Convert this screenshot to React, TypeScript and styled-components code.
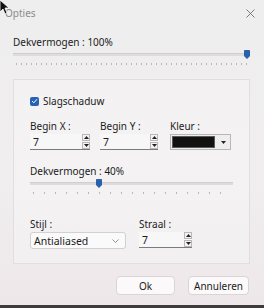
import React from "react";
import styled, { createGlobalStyle } from "styled-components";

const GlobalStyle = createGlobalStyle`
  html, body {
    margin: 0;
    padding: 0;
    background: #3f3a3c;
  }
  * {
    box-sizing: border-box;
  }
`

const Window = styled.div`
  position: relative;
  width: 264px;
  height: 305px;
  display: flex;
  flex-direction: column;
  background: linear-gradient(180deg, #efeeef 0%, #f0eeef 60%, #eee7ea 100%);
  font-family: "Noto Sans", "Open Sans", sans-serif;
  font-size: 10px;
  color: #1b1b1b;
  overflow: hidden;
`

const TitleBar = styled.div`
  height: 25px;
  display: flex;
  align-items: center;
  justify-content: space-between;
  padding: 0 9px 0 5px;
`

const Title = styled.span`
  color: #8d8b8c;
  font-size: 10px;
`

const CloseButton = styled.button`
  border: none;
  background: none;
  padding: 0;
  width: 9px;
  height: 9px;
  display: flex;
  margin-top: 2px;
`

const Cursor = styled.svg`
  position: absolute;
  left: -1px;
  top: -1px;
`

const Content = styled.div`
  display: flex;
  flex-direction: column;
  padding: 0 14px 0 13px;
`

const Label = styled.div<{ $top?: number }>`
  line-height: 12px;
  height: 12px;
  margin-top: ${p => p.$top || 0}px;
  white-space: nowrap;
`

const SliderBox = styled.div<{ $w?: number }>`
  position: relative;
  height: 17px;
  width: ${p => (p.$w ? `${p.$w}px` : "100%")};
  margin-top: 1px;
`

const Track = styled.div`
  position: absolute;
  left: 0;
  right: 0;
  top: 4px;
  height: 3px;
  background: #dedcdd;
  border-top: 1px solid #cfcdce;
`

const Ticks = styled.div<{ $step: number; $inset: number }>`
  position: absolute;
  left: ${p => p.$inset}px;
  right: ${p => p.$inset}px;
  top: 14px;
  height: 2px;
  background: repeating-linear-gradient(
    90deg,
    #b8b6b7 0px,
    #b8b6b7 1px,
    transparent 1px,
    transparent ${p => p.$step}px
  );
`

const Thumb = styled.svg`
  position: absolute;
  top: 1px;
  margin-left: -3px;
`

const GroupBox = styled.div`
  margin-top: 13px;
  width: 237px;
  border: 1px solid #e1dedf;
  background: rgba(255, 255, 255, 0.28);
  padding: 15px 16px 14px 16px;
  display: flex;
  flex-direction: column;
`

const CheckRow = styled.label`
  display: flex;
  align-items: center;
  gap: 4px;
  height: 12px;
  line-height: 12px;
`

const CheckBox = styled.span`
  width: 9px;
  height: 9px;
  border-radius: 2px;
  background: #2761b3;
  display: flex;
  align-items: center;
  justify-content: center;
`

const Row = styled.div<{ $top: number; $gap: number }>`
  display: flex;
  gap: ${p => p.$gap}px;
  margin-top: ${p => p.$top}px;
`

const Field = styled.div<{ $w: number }>`
  display: flex;
  flex-direction: column;
  gap: 2px;
  width: ${p => p.$w}px;
`

const SpinBox = styled.div`
  height: 16px;
  display: flex;
  align-items: center;
  background: #f8f7f8;
  border-bottom: 1px solid #7d7b7c;
  padding-left: 3px;
`

const SpinValue = styled.span`
  flex: 1;
  font-size: 10.5px;
`

const SpinButtons = styled.div`
  display: flex;
  flex-direction: column;
  gap: 1px;
`

const SpinButton = styled.div`
  width: 8px;
  height: 7px;
  border: 1px solid #b9b7b8;
  background: #f4f3f4;
  display: flex;
  align-items: center;
  justify-content: center;
`

const ColorPicker = styled.div`
  height: 16px;
  display: flex;
  border: 1px solid #b8b6b7;
  background: #efeeef;
`

const Swatch = styled.div`
  flex: 1;
  margin: 1px;
  background: #121212;
  border: 1px solid #5a5a5a;
`

const DropButton = styled.div`
  width: 14px;
  display: flex;
  align-items: center;
  justify-content: center;
`

const Select = styled.div`
  height: 17px;
  display: flex;
  align-items: center;
  justify-content: space-between;
  border: 1px solid #d2d0d1;
  border-radius: 3px;
  background: #fbfafa;
  padding: 0 6px 0 3px;
  font-size: 10.5px;
`

const Footer = styled.div`
  display: flex;
  justify-content: flex-end;
  gap: 13px;
  margin-top: 12px;
  padding-right: 1px;
`

const Button = styled.button<{ $w: number }>`
  width: ${p => p.$w}px;
  height: 19px;
  border: 1px solid #d9d4d6;
  border-radius: 4px;
  background: #fbf9fa;
  font-family: "Noto Sans", "Open Sans", sans-serif;
  font-size: 10px;
  color: #1b1b1b;
  padding: 0;
`

const Tri = ({ up }: { up?: boolean }) => (
  <svg width="5" height="3" viewBox="0 0 5 3">
    <path d={up ? "M0 3 L2.5 0 L5 3 Z" : "M0 0 L5 0 L2.5 3 Z"} fill="#222" />
  </svg>
)

const Spin = ({ value, w }: { value: string; w: number }) => (
  <SpinBox style={{ width: w }}>
    <SpinValue>{value}</SpinValue>
    <SpinButtons>
      <SpinButton><Tri up /></SpinButton>
      <SpinButton><Tri /></SpinButton>
    </SpinButtons>
  </SpinBox>
)

const Slider = ({ pos, step, inset, w }: { pos: number; step: number; inset: number; w?: number }) => (
  <SliderBox $w={w}>
    <Track />
    <Ticks $step={step} $inset={inset} />
    <Thumb width="6" height="9" viewBox="0 0 6 9" style={{ left: `${pos}px` }}>
      <path d="M0.5 0.5 H5.5 V6 L3 8.6 L0.5 6 Z" fill="#2462b4" stroke="#1a4f96" strokeWidth="0.8" />
    </Thumb>
  </SliderBox>
)

export default function App() {
  return (
    <>
      <GlobalStyle />
      <Window>
        <TitleBar>
          <Title>Opties</Title>
          <CloseButton aria-label="Sluiten">
            <svg width="9" height="9" viewBox="0 0 9 9">
              <path d="M0.5 0.5 L8.5 8.5 M8.5 0.5 L0.5 8.5" stroke="#6f6d6e" strokeWidth="0.9" />
            </svg>
          </CloseButton>
        </TitleBar>
        <Content>
          <Label $top={11}>Dekvermogen : 100%</Label>
          <Slider pos={234} step={5} inset={3} />
          <GroupBox>
            <CheckRow>
              <CheckBox>
                <svg width="7" height="6" viewBox="0 0 7 6">
                  <path d="M1 3 L2.8 4.8 L6 1.2" stroke="#fff" strokeWidth="1" fill="none" />
                </svg>
              </CheckBox>
              Slagschaduw
            </CheckRow>
            <Row $top={13} $gap={10}>
              <Field $w={60}>
                <Label>Begin X :</Label>
                <Spin value="7" w={60} />
              </Field>
              <Field $w={58}>
                <Label>Begin Y :</Label>
                <Spin value="7" w={58} />
              </Field>
              <Field $w={61} style={{ marginLeft: 2 }}>
                <Label>Kleur :</Label>
                <ColorPicker>
                  <Swatch />
                  <DropButton><Tri /></DropButton>
                </ColorPicker>
              </Field>
            </Row>
            <Label $top={15}>Dekvermogen : 40%</Label>
            <Slider pos={69} step={11} inset={3} w={203} />
            <Row $top={23} $gap={13}>
              <Field $w={96}>
                <Label>Stijl :</Label>
                <Select>
                  Antialiased
                  <svg width="7" height="4" viewBox="0 0 7 4">
                    <path d="M0.5 0.5 L3.5 3.5 L6.5 0.5" stroke="#777" strokeWidth="0.8" fill="none" />
                  </svg>
                </Select>
              </Field>
              <Field $w={53}>
                <Label>Straal :</Label>
                <Spin value="7" w={53} />
              </Field>
            </Row>
          </GroupBox>
          <Footer>
            <Button $w={59}>Ok</Button>
            <Button $w={61}>Annuleren</Button>
          </Footer>
        </Content>
        <Cursor width="10" height="16" viewBox="0 0 10 16">
          <path d="M1 1 L1 13 L4 10 L6 15 L8 14 L6 9 L10 9 Z" fill="#111" stroke="#fff" strokeWidth="0.8" />
        </Cursor>
      </Window>
    </>
  );
}
